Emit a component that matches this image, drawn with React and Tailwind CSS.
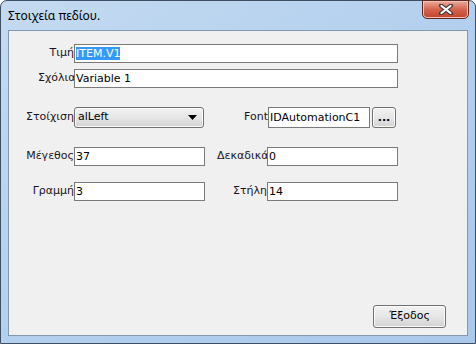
import React from "react";

const fieldCls =
  "h-[19px] border border-[#7a7a7a] bg-white pl-px text-[11px] leading-[17px] text-black whitespace-nowrap overflow-hidden";

const btnCls =
  "border border-[#707070] rounded-[3px] bg-gradient-to-b from-[#f2f2f2] via-[#e6e6e6] to-[#d2d2d2] shadow-[inset_0_0_0_1px_#fcfcfc]";

const Label = ({ children, width, pad, clip }) => (
  <div
    className={`shrink-0 overflow-hidden whitespace-nowrap text-[11px] text-[#1a1420] ${
      clip ? "text-left" : "text-right"
    }`}
    style={{ width, paddingLeft: pad || 0 }}
  >
    {children}
  </div>
);

const CloseButton = () => (
  <button className="w-[47px] h-[19px] mr-[6px] -mt-px rounded-b-[5px] border border-[#5a2a22] bg-gradient-to-b from-[#e9a99b] via-[#d4644d] to-[#c3432c] shadow-[inset_0_0_0_1px_#f2c2b8] flex items-center justify-center">
    <svg width="16" height="11" viewBox="0 0 16 11">
      <path
        d="M3 1.5 L13 9.5 M13 1.5 L3 9.5"
        stroke="#4a3a3a"
        strokeWidth="4.2"
        strokeLinecap="round"
      />
      <path
        d="M3.5 2 L12.5 9 M12.5 2 L3.5 9"
        stroke="#ffffff"
        strokeWidth="2.2"
        strokeLinecap="round"
      />
    </svg>
  </button>
);

export default function App() {
  return (
    <div className="w-[476px] h-[344px] flex flex-col rounded-t-[7px] border border-[#3f4f63] bg-gradient-to-br from-[#c4daf1] via-[#b3d0ee] to-[#a9c8ea] font-['DejaVu_Sans',sans-serif]">
      {/* title bar */}
      <div className="h-[29px] shrink-0 flex items-start justify-between">
        <span className="pl-[7px] pt-[8px] text-[12px] leading-[14px] text-black font-['Noto_Sans',sans-serif]">
          Στοιχεία πεδίου.
        </span>
        <CloseButton />
      </div>

      {/* client area */}
      <div className="flex-1 mx-[7px] mb-[7px] border border-[#8397b0] bg-[#f0f0f0] flex flex-col pt-[13px] pr-[21px] pb-[7px]">
        <div className="flex items-center h-[19px]">
          <Label width={65}>Τιμή</Label>
          <div className={`${fieldCls} w-[324px]`}>
            <span className="bg-[#3399ff] text-white">ITEM.V1</span>
          </div>
        </div>

        <div className="flex items-center h-[19px] mt-[6px]">
          <Label width={65} pad={29} clip>
            Σχόλια
          </Label>
          <div className={`${fieldCls} w-[324px]`}>Variable 1</div>
        </div>

        <div className="flex items-center h-[21px] mt-[19px]">
          <Label width={65}>Στοίχιση</Label>
          <div className={`${btnCls} w-[130px] h-[21px] flex items-center justify-between pl-[3px] pr-[6px] text-[11px] text-black`}>
            <span>alLeft</span>
            <svg width="9" height="5" viewBox="0 0 9 5">
              <path d="M0 0 H9 L4.5 5 Z" fill="#000" />
            </svg>
          </div>
          <Label width={64}>Font</Label>
          <div className={`${fieldCls} w-[102px] h-[21px] leading-[19px]`}>IDAutomationC1</div>
          <div className={`${btnCls} ml-[2px] w-[24px] h-[21px] flex items-center justify-center text-[11px] font-bold leading-none text-black`}>
            ...
          </div>
        </div>

        <div className="flex items-center h-[19px] mt-[19px]">
          <Label width={65}>Μέγεθος</Label>
          <div className={`${fieldCls} w-[131px]`}>37</div>
          <Label width={62} pad={12} clip>
            Δεκαδικά
          </Label>
          <div className={`${fieldCls} w-[131px]`}>0</div>
        </div>

        <div className="flex items-center h-[19px] mt-[16px]">
          <Label width={65}>Γραμμή</Label>
          <div className={`${fieldCls} w-[131px]`}>3</div>
          <Label width={62}>Στήλη</Label>
          <div className={`${fieldCls} w-[131px]`}>14</div>
        </div>

        <div className="mt-auto self-end">
          <button className={`${btnCls} w-[73px] h-[23px] text-[11px] text-black`}>
            Έξοδος
          </button>
        </div>
      </div>
    </div>
  );
}
